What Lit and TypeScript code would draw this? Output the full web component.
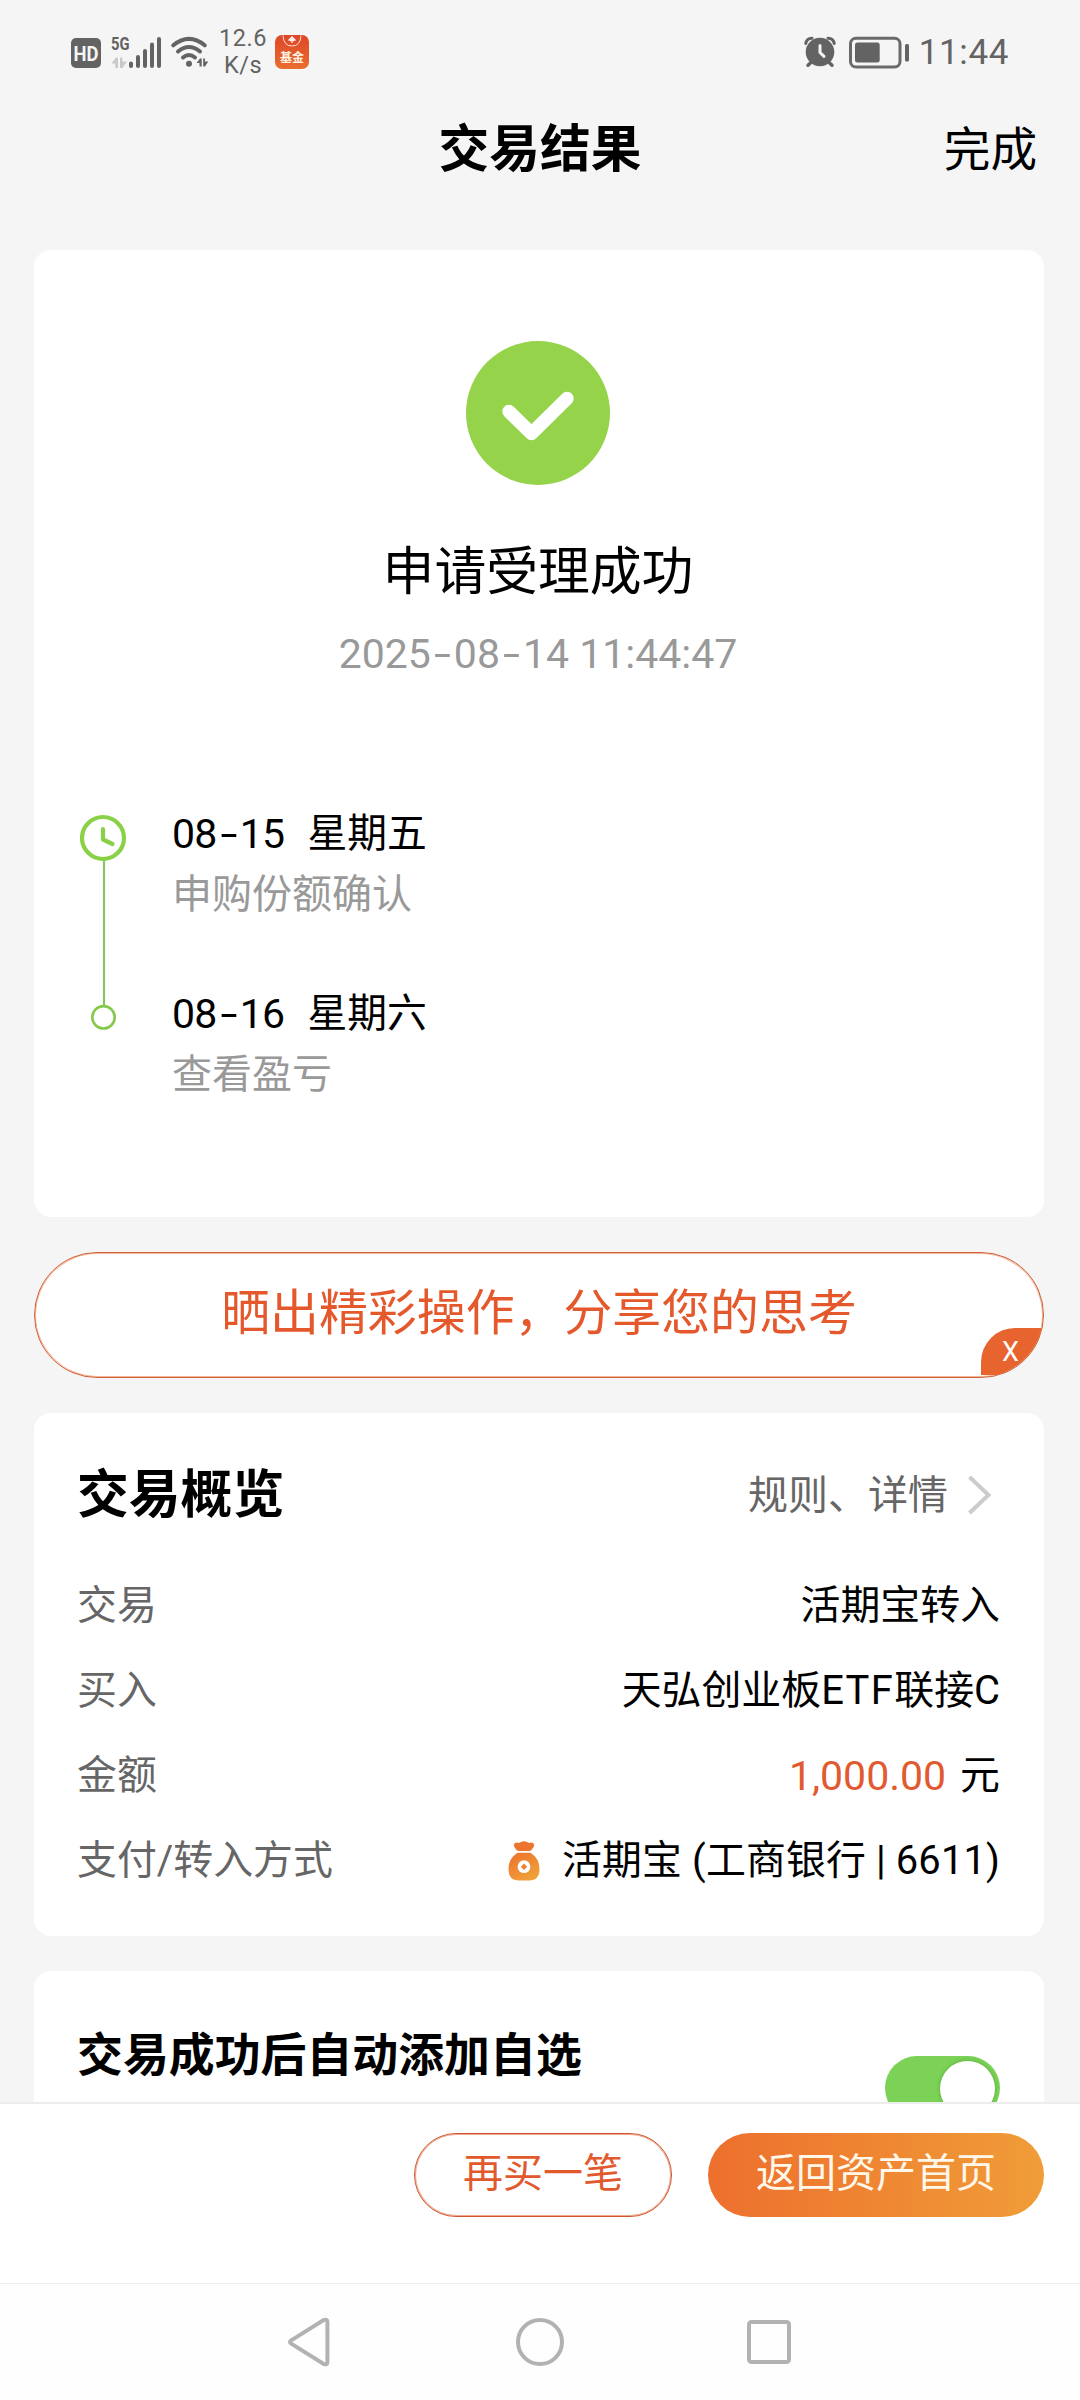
import { LitElement, html, css, svg } from "lit";
import { customElement, property } from "lit/decorators.js";

@customElement("status-bar")
class StatusBar extends LitElement {
  static styles = css`
    :host {
      display: flex;
      align-items: center;
      justify-content: space-between;
      height: 104px;
      padding: 0 71px 0 71px;
      box-sizing: border-box;
      color: #636363;
    }
    .side {
      display: flex;
      align-items: center;
    }
    svg {
      display: block;
    }
    .signals {
      margin-top: 1px;
    }
    .speed {
      width: 50px;
      margin: 0 7px 0 8px;
      text-align: center;
      font-size: 23.5px;
      line-height: 27px;
      letter-spacing: 0.5px;
    }
    .clock {
      font-size: 35px;
      line-height: 40px;
      letter-spacing: 0.6px;
      margin: 1px 0 0 9px;
    }
  `;
  render() {
    return html`
      <div class="side">
        <svg class="signals" width="139" height="40" viewBox="71 33 139 40">
          <rect x="71" y="38" width="30" height="30" rx="5" fill="#636363" />
          <text x="86" y="60.5" text-anchor="middle" font-size="19.5" font-weight="700" fill="#f5f5f5" textLength="25" lengthAdjust="spacingAndGlyphs">HD</text>
          <text x="111" y="50.3" font-size="19" font-weight="700" fill="#636363" textLength="18.5" lengthAdjust="spacingAndGlyphs">5G</text>
          <g fill="#c9c9c9">
            <path d="M111.5 63.500 L116 57.500 H118 V68 H115.3 V63.500 Z" />
            <path d="M120 57.500 H122.3 V61.500 H127 L122.3 68 H120 Z" />
          </g>
          <path d="M131 63.500v2.500M138 57v9M145 51v15M152 44.500v21.500M159 39v27" stroke="#636363" stroke-width="4" stroke-linecap="round" />
          <g fill="none" stroke="#636363" stroke-width="4" stroke-linecap="round">
            <path d="M173.300 45.300 Q189 32.500 204.700 45.300" />
            <path d="M178 51.500 Q189 42.500 200 51.500" />
            <path d="M183 57.500 Q189 52.500 195 57.500" />
          </g>
          <circle cx="189" cy="63.700" r="3" fill="#636363" />
          <g fill="#636363">
            <path d="M196.500 63 L200 58.500 H201.700 V66.500 H199.500 V63 Z" />
            <path d="M203.200 58.500 H205 V61.500 H208.300 L205 66.500 H203.200 Z" />
          </g>
        </svg>
        <div class="speed">12.6<br />K/s</div>
        <svg width="34" height="34" viewBox="0 0 34 34">
          <defs>
            <linearGradient id="app" x1="0" y1="0" x2="0" y2="1">
              <stop offset="0" stop-color="#de4628" />
              <stop offset="1" stop-color="#ea6e2f" />
            </linearGradient>
          </defs>
          <rect width="34" height="34" rx="7" fill="url(#app)" />
          <path d="M8 0.500 Q8.500 11 17 11 Q25.500 11 26 0.500" fill="none" stroke="#fbe3d5" stroke-width="1" />
          <path d="M13.500 5.500 L17 1.800 L20.500 5.500 M15 6 L17 3.800 L19 6 M17 4 V8" fill="none" stroke="#fff" stroke-width="1.200" />
          <text x="17" y="26.500" text-anchor="middle" font-size="12" font-weight="700" fill="#fff3e2">基金</text>
        </svg>
      </div>
      <div class="side">
        <svg width="106" height="34" viewBox="804 35 106 34">
          <g fill="none" stroke="#636363" stroke-linecap="round">
            <path d="M805.800 43.500 Q806.500 38.500 812 38.200" stroke-width="3" />
            <path d="M834.200 43.500 Q833.500 38.500 828 38.200" stroke-width="3" />
            <path d="M808 65.300 L812 61.500 M832 65.300 L828 61.500" stroke-width="3.400" />
          </g>
          <circle cx="820" cy="52" r="14.300" fill="#636363" />
          <path d="M820 45.500 V52.500 L824 56.300" fill="none" stroke="#f5f5f5" stroke-width="3" stroke-linecap="round" stroke-linejoin="round" />
          <rect x="850.500" y="38.300" width="49.500" height="28.700" rx="5.500" fill="none" stroke="#6a6a6a" stroke-width="3" />
          <rect x="855" y="42.500" width="24.700" height="20" rx="2.500" fill="#636363" />
          <rect x="905" y="44" width="4" height="17.500" rx="1.500" fill="#636363" />
        </svg>
        <span class="clock">11:44</span>
      </div>
    `;
  }
}

@customElement("date-text")
class DateText extends LitElement {
  @property() value = "";
  static styles = css`
    .dash {
      display: inline-block;
      width: 23px;
      text-align: center;
      transform: scaleX(1.5);
    }
    .run {
      white-space: pre;
    }
  `;
  render() {
    return html`<span class="run">${this.value
      .split(/(-)/)
      .map((part) => (part === "-" ? html`<span class="dash">-</span>` : part))}</span>`;
  }
}

@customElement("result-card")
class ResultCard extends LitElement {
  static styles = css`
    :host {
      display: flex;
      flex-direction: column;
      align-items: center;
      height: 967px;
      padding-top: 91px;
      box-sizing: border-box;
      background: #fff;
      border-radius: 17px;
    }
    .done {
      display: block;
      margin-right: 2px;
    }
    .headline {
      margin: 58px 2px 0 0;
      font-size: 51.8px;
      line-height: 60px;
      color: #000;
    }
    .time {
      margin: 26px 2px 0 0;
      font-size: 41px;
      line-height: 50px;
      color: #999;
    }
    .timeline {
      display: flex;
      align-self: stretch;
      margin-top: 125px;
      padding-left: 46px;
    }
    .rail {
      display: block;
      margin: 10px 45px 0 0;
    }
    .steps {
      display: flex;
      flex-direction: column;
      gap: 60px;
      font-size: 39.8px;
      line-height: 60px;
    }
    .day {
      display: flex;
      gap: 23px;
      color: #000;
    }
    .digits {
      font-size: 41px;
      letter-spacing: -0.7px;
    }
    .note {
      padding-top: 1px;
      margin-bottom: -1px;
      font-size: 40px;
      color: #999;
    }
  `;
  private steps = [
    { date: "08-15", day: "星期五", note: "申购份额确认" },
    { date: "08-16", day: "星期六", note: "查看盈亏" },
  ];
  render() {
    return html`
      <svg class="done" width="144" height="144" viewBox="0 0 144 144">
        <circle cx="72" cy="72" r="72" fill="#94d34a" />
        <path d="M43 70.500 L65.500 92.500 L101 57.500" fill="none" stroke="#fff" stroke-width="13.500" stroke-linecap="round" stroke-linejoin="round" />
      </svg>
      <div class="headline">申请受理成功</div>
      <div class="time"><date-text value="2025-08-14 11:44:47"></date-text></div>
      <div class="timeline">
        <svg class="rail" width="47" height="217" viewBox="80 814 47 217">
          <path d="M104 860 V1006" stroke="#8ac564" stroke-width="2.200" />
          <circle cx="103" cy="838" r="21" fill="none" stroke="#8ad147" stroke-width="4.200" />
          <path d="M103 829 V839.500 L112.500 844" fill="none" stroke="#8ad147" stroke-width="4.200" stroke-linecap="round" stroke-linejoin="round" />
          <circle cx="103.500" cy="1017.300" r="11.200" fill="#fff" stroke="#85c94c" stroke-width="2.600" />
        </svg>
        <div class="steps">
          ${this.steps.map(
            (s) => html`<div>
              <div class="day"><date-text class="digits" value=${s.date}></date-text><span>${s.day}</span></div>
              <div class="note">${s.note}</div>
            </div>`
          )}
        </div>
      </div>
    `;
  }
}

@customElement("share-banner")
class ShareBanner extends LitElement {
  static styles = css`
    :host {
      display: block;
      position: relative;
      height: 126px;
      box-sizing: border-box;
      border: 1px solid #cf6038;
      border-radius: 63px;
      box-shadow: inset 0 0 0 1px #f6b698;
      overflow: hidden;
      background: #fff;
    }
    .text {
      text-align: center;
      font-size: 48.9px;
      line-height: 121px;
      color: #e4582b;
      white-space: nowrap;
    }
    .close {
      position: absolute;
      right: 0;
      bottom: 2px;
      width: 62px;
      height: 47px;
      box-sizing: border-box;
      padding-left: 21px;
      border-top-left-radius: 34px;
      background: #e8642f;
      color: #fff;
      font-size: 27px;
      line-height: 48px;
    }
  `;
  render() {
    return html`<div class="text">晒出精彩操作，分享您的思考</div>
      <div class="close">X</div>`;
  }
}

@customElement("overview-card")
class OverviewCard extends LitElement {
  static styles = css`
    :host {
      display: block;
      height: 523px;
      padding: 42px 44px 0 43px;
      box-sizing: border-box;
      background: #fff;
      border-radius: 17px;
    }
    .head {
      display: flex;
      align-items: center;
      height: 80px;
      margin-bottom: 28px;
      line-height: 79px;
    }
    .title {
      flex: 1;
      font-size: 51.8px;
      font-weight: 700;
      color: #000;
    }
    .more {
      font-size: 40px;
      color: #666;
    }
    .chevron {
      display: block;
      margin: 0 8px 0 19px;
    }
    .row {
      display: flex;
      align-items: center;
      justify-content: space-between;
      height: 85px;
      font-size: 39.9px;
      line-height: 60px;
    }
    .label {
      color: #666;
    }
    .value {
      display: flex;
      align-items: center;
      color: #000;
      white-space: pre;
    }
    .latin {
      letter-spacing: 1.4px;
    }
    .amount {
      color: #e15a30;
      font-size: 41px;
      margin-right: 14px;
    }
    .bag {
      display: block;
      margin-right: 22px;
    }
    .card {
      letter-spacing: 0.12px;
    }
  `;
  render() {
    return html`
      <div class="head">
        <span class="title">交易概览</span>
        <span class="more">规则、详情</span>
        <svg class="chevron" width="25" height="40" viewBox="0 0 25 40">
          <path d="M2.500 2 L21.500 20 L2.500 38" fill="none" stroke="#ccc" stroke-width="4" />
        </svg>
      </div>
      <div class="row"><span class="label">交易</span><span class="value">活期宝转入</span></div>
      <div class="row">
        <span class="label">买入</span>
        <span class="value">天弘创业板<span class="latin">ETF</span>联接C</span>
      </div>
      <div class="row">
        <span class="label">金额</span>
        <span class="value"><span class="amount">1,000.00</span>元</span>
      </div>
      <div class="row">
        <span class="label">支付/转入方式</span>
        <span class="value"><svg class="bag" width="32" height="40" viewBox="0 0 32 40">
            <defs>
              <linearGradient id="bag" x1="0" y1="0" x2="0.600" y2="1">
                <stop offset="0" stop-color="#ec702e" />
                <stop offset="1" stop-color="#f0a039" />
              </linearGradient>
            </defs>
            <path d="M8.500 9 Q4.500 5 6.500 2.500 Q8.500 1 11 2 Q16 -1.500 21 2 Q23.500 1 25.500 2.500 Q27.500 5 23.500 9 Q22.500 10 21 10 H11 Q9.500 10 8.500 9 Z" fill="#ec742e" />
            <path d="M9.500 11.800 H22.500 Q31.500 17.500 31.500 28 Q31.500 39.500 21 39.500 H11 Q0.500 39.500 0.500 28 Q0.500 17.500 9.500 11.800 Z" fill="url(#bag)" />
            <circle cx="16" cy="25.700" r="6.400" fill="#fff" />
            <path d="M16 22.500 L19.200 25.700 L16 28.900 L12.800 25.700 Z" fill="#ee8233" />
          </svg><span class="card">活期宝 (工商银行 | 6611)</span></span>
      </div>
    `;
  }
}

@customElement("auto-add-card")
class AutoAddCard extends LitElement {
  static styles = css`
    :host {
      display: flex;
      justify-content: space-between;
      align-items: flex-start;
      height: 260px;
      padding: 54px 44px 0 43px;
      box-sizing: border-box;
      background: #fff;
      border-radius: 17px;
    }
    .title {
      font-size: 45.9px;
      font-weight: 700;
      line-height: 60px;
      color: #000;
    }
    .switch {
      display: flex;
      justify-content: flex-end;
      align-items: center;
      width: 115px;
      height: 64px;
      margin-top: 31px;
      padding-right: 5px;
      box-sizing: border-box;
      border-radius: 32px;
      background: #7bd257;
    }
    .knob {
      width: 55px;
      height: 55px;
      border-radius: 50%;
      background: #fff;
      box-shadow: 0 0 4px rgba(0, 80, 0, 0.3);
    }
  `;
  render() {
    return html`<span class="title">交易成功后自动添加自选</span>
      <div class="switch"><div class="knob"></div></div>`;
  }
}

@customElement("action-bar")
class ActionBar extends LitElement {
  static styles = css`
    :host {
      display: flex;
      justify-content: flex-end;
      align-items: flex-start;
      gap: 36px;
      height: 181px;
      padding: 29px 36px 0 0;
      box-sizing: border-box;
      border-top: 2px solid #ededed;
      background: #fff;
    }
    .button {
      height: 84px;
      box-sizing: border-box;
      border-radius: 42px;
      font-size: 40px;
      text-align: center;
    }
    .again {
      width: 258px;
      border: 1px solid #cc5730;
      box-shadow: inset 0 0 0 1px #f0a98a;
      color: #e1592d;
      line-height: 80px;
    }
    .home {
      width: 336px;
      background: linear-gradient(90deg, #ed6f2d, #f09d38);
      color: #fff8ea;
      line-height: 82px;
    }
  `;
  render() {
    return html`<div class="button again">再买一笔</div>
      <div class="button home">返回资产首页</div>`;
  }
}

@customElement("nav-bar")
class NavBar extends LitElement {
  static styles = css`
    :host {
      display: flex;
      justify-content: center;
      height: 117px;
      padding-top: 33px;
      box-sizing: border-box;
      border-top: 1px solid #efefef;
      background: #fefefe;
    }
    .key {
      display: block;
      width: 50px;
      height: 50px;
      margin: 0 89.500px;
    }
  `;
  private shapes = [
    svg`<path d="M5.200 23.400 L37.300 3.200 Q41.400 1.500 41.400 5 V45 Q41.400 48.500 37.300 46.800 L5.200 26.600 Q2.800 25 5.200 23.400 Z" />`,
    svg`<circle cx="25" cy="25" r="22" />`,
    svg`<rect x="5" y="5" width="40" height="40" rx="2.500" />`,
  ];
  render() {
    return this.shapes.map(
      (s) => html`<svg class="key" viewBox="0 0 50 50" fill="none" stroke="#b2b2b2" stroke-width="4">${s}</svg>`
    );
  }
}

@customElement("app-root")
class AppRoot extends LitElement {
  static styles = css`
    :host {
      display: flex;
      flex-direction: column;
      width: 1080px;
      height: 2400px;
      overflow: hidden;
      background: #f5f5f5;
      font-family: Roboto, "Noto Sans CJK SC", sans-serif;
    }
    .titlebar {
      display: grid;
      grid-template-columns: 1fr auto 1fr;
      align-items: center;
      height: 92px;
      padding: 0 43px;
      line-height: 90px;
      color: #000;
    }
    .title {
      grid-column: 2;
      font-size: 50.7px;
      font-weight: 700;
    }
    .finish {
      justify-self: end;
      font-size: 46.6px;
    }
    .content {
      flex: 1;
      min-height: 0;
      display: flex;
      flex-direction: column;
      gap: 35px;
      padding: 54px 36px 0 34px;
      overflow: hidden;
    }
    .content > * {
      flex-shrink: 0;
    }
  `;
  render() {
    return html`
      <status-bar></status-bar>
      <div class="titlebar">
        <span class="title">交易结果</span>
        <span class="finish">完成</span>
      </div>
      <div class="content">
        <result-card></result-card>
        <share-banner></share-banner>
        <overview-card></overview-card>
        <auto-add-card></auto-add-card>
      </div>
      <action-bar></action-bar>
      <nav-bar></nav-bar>
    `;
  }
}
